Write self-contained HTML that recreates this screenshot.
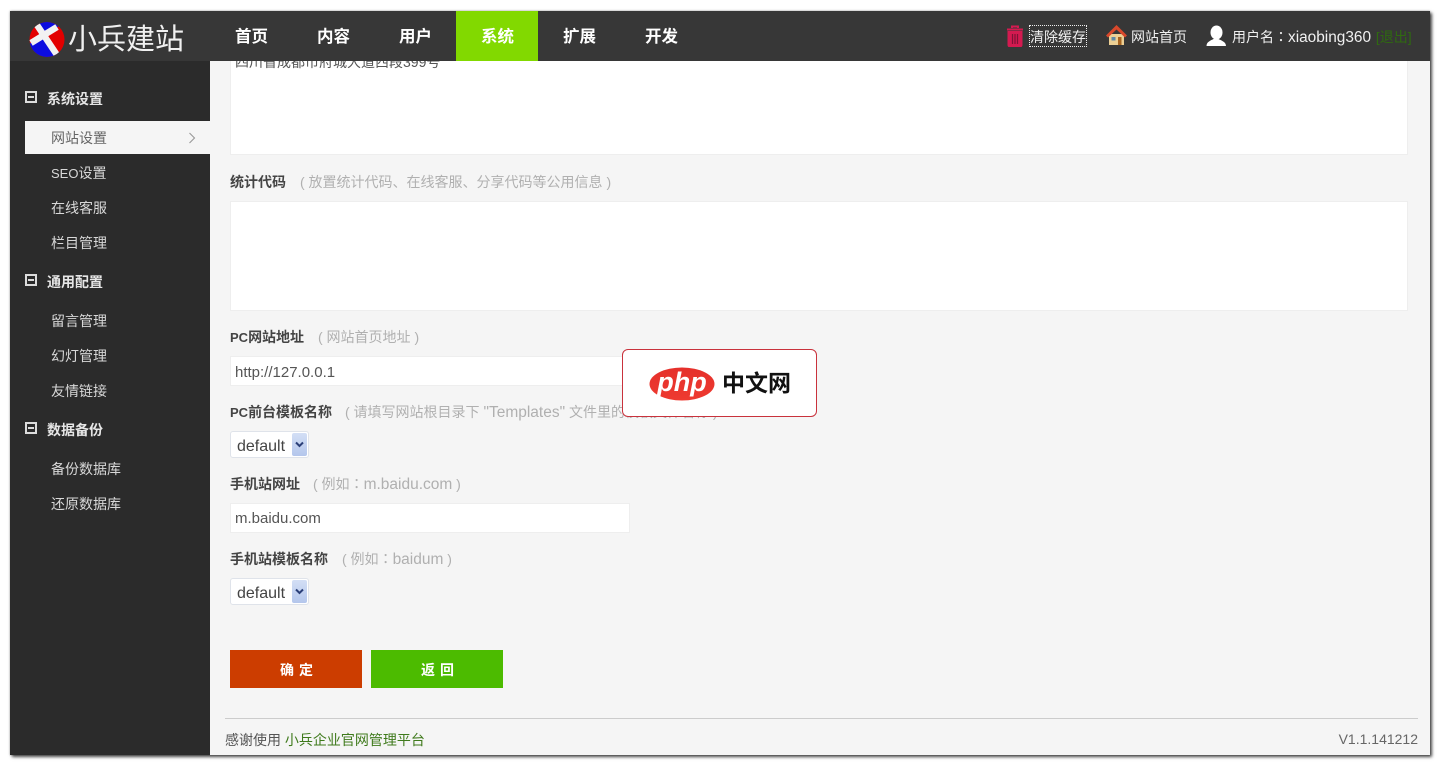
<!DOCTYPE html>
<html lang="zh"><head><meta charset="utf-8"><title>小兵建站</title>
<style>
html,body{margin:0;padding:0;width:1440px;height:766px;overflow:hidden;background:#fff}
*{box-sizing:border-box}
body{font-family:"Liberation Sans","Noto Sans CJK SC",sans-serif;font-size:14px;color:#444}
.a{position:absolute;white-space:nowrap}
.tc{font-family:"Noto Sans CJK TC",sans-serif}
#win{position:absolute;left:10px;top:11px;width:1420px;height:744px;background:#f5f5f5;box-shadow:2px 2px 3px rgba(0,0,0,.7),0 0 2px rgba(0,0,0,.35);overflow:hidden}
#side{position:absolute;left:0;top:50px;width:200px;height:694px;background:#2b2b2b}
#top{position:absolute;left:0;top:0;width:1420px;height:50px;background:#373737}
.nav{position:absolute;top:0;height:50px;width:82px;padding-left:1px;text-align:center;line-height:52px;color:#fff;font-size:16.5px;font-weight:bold}
.g{color:#e6e6e6;font-size:14px;font-weight:bold;line-height:20px}
.s{color:#d8d8d8;font-size:14px;line-height:20px}
.box{position:absolute;width:12px;height:12px;border:2px solid #ddd}
.box:after{content:"";position:absolute;left:1px;top:3px;width:6px;height:2px;background:#ddd}
.lab{font-weight:bold;font-size:14px;color:#444;line-height:20px}
.lab span{font-size:13px}
.hint{font-size:14px;color:#b0b0b0;line-height:20px}
.hint b{font-weight:normal;font-size:15.500px}
.f{position:absolute;background:#fff;border:1px solid #eee}
.sel{position:absolute;width:79px;height:27px;background:#fff;border:1px solid #dfe3ea;border-radius:3px;font-size:16px;line-height:29px;padding-left:6px;color:#444}
.sel i{position:absolute;right:1px;top:1px;width:15px;height:23px;background:linear-gradient(#d3dff5,#b4c6ec);border-radius:2px}
.sel svg{position:absolute;left:3px;top:8px}
.btn{position:absolute;width:132px;height:38px;padding-left:6px;color:#fff;font-size:14px;font-weight:bold;text-align:center;line-height:41px;letter-spacing:5px}
</style></head><body>
<div id="win">
<div id="side">
 <div class="box" style="left:15px;top:30px"></div><div class="a g" style="left:37px;top:28px">系统设置</div>
 <div class="a" style="left:15px;top:60px;width:185px;height:33px;background:#f5f5f5"></div>
 <div class="a s" style="left:41px;top:67px;color:#666">网站设置</div>
 <svg class="a" style="left:178px;top:71px" width="8" height="12"><path d="M1.500 1l5 5-5 5" fill="none" stroke="#999" stroke-width="1.100"/></svg>
 <div class="a s" style="left:41px;top:102px"><span style="font-size:13px">SEO</span>设置</div>
 <div class="a s" style="left:41px;top:137px">在线客服</div>
 <div class="a s" style="left:41px;top:172px">栏目管理</div>
 <div class="box" style="left:15px;top:213px"></div><div class="a g" style="left:37px;top:211px">通用配置</div>
 <div class="a s" style="left:41px;top:250px">留言管理</div>
 <div class="a s" style="left:41px;top:285px">幻灯管理</div>
 <div class="a s" style="left:41px;top:320px">友情链接</div>
 <div class="box" style="left:15px;top:361px"></div><div class="a g" style="left:37px;top:359px">数据备份</div>
 <div class="a s" style="left:41px;top:398px">备份数据库</div>
 <div class="a s" style="left:41px;top:433px">还原数据库</div>
</div>

<div class="f" style="left:220px;top:30px;width:1178px;height:114px"></div>
<div class="a" style="left:225px;top:41px;font-size:14px;line-height:20px;color:#555">四川省成都市府城大道西段399号</div>

<div class="a lab" style="left:220px;top:161px">统计代码</div>
<div class="a hint" style="left:290px;top:161px">( 放置统计代码、在线客服、分享代码等公用信息 )</div>
<div class="f" style="left:220px;top:190px;width:1178px;height:110px"></div>

<div class="a lab" style="left:220px;top:316px"><span>PC</span>网站地址</div>
<div class="a hint" style="left:308px;top:316px">( 网站首页地址 )</div>
<div class="f" style="left:220px;top:345px;width:400px;height:30px"></div>
<div class="a" style="left:225px;top:352px;font-size:15px;line-height:20px;color:#555">http://127.0.0.1</div>

<div class="a lab" style="left:220px;top:391px"><span>PC</span>前台模板名称</div>
<div class="a hint" style="left:335px;top:391px">( 请填写网站根目录下 <b>"Templates"</b> 文件里的模板文件名称 )</div>
<div class="sel" style="left:220px;top:420px">default<i><svg width="9" height="7"><path d="M1 1.500l3.500 3.500L8 1.500" fill="none" stroke="#2b3f78" stroke-width="2"/></svg></i></div>

<div class="a lab" style="left:220px;top:463px">手机站网址</div>
<div class="a hint" style="left:303px;top:463px">( 例如<span class="tc" lang="zh-Hant">：</span><b>m.baidu.com</b> )</div>
<div class="f" style="left:220px;top:492px;width:400px;height:30px"></div>
<div class="a" style="left:225px;top:498px;font-size:15px;line-height:20px;color:#555">m.baidu.com</div>

<div class="a lab" style="left:220px;top:538px">手机站模板名称</div>
<div class="a hint" style="left:332px;top:538px">( 例如<span class="tc" lang="zh-Hant">：</span><b>baidum</b> )</div>
<div class="sel" style="left:220px;top:567px">default<i><svg width="9" height="7"><path d="M1 1.500l3.500 3.500L8 1.500" fill="none" stroke="#2b3f78" stroke-width="2"/></svg></i></div>

<div class="btn" style="left:220px;top:639px;background:#cc3d00">确定</div>
<div class="btn" style="left:361px;top:639px;background:#4cbb00">返回</div>

<div class="a" style="left:215px;top:707px;width:1193px;height:1px;background:#ccc"></div>
<div class="a" style="left:215px;top:719px;font-size:14px;line-height:20px;color:#555">感谢使用 <span style="color:#3f7a1c">小兵企业官网管理平台</span></div>
<div class="a" style="right:12px;top:718px;font-size:14px;line-height:20px;color:#666">V1.1.141212</div>

<div id="top">
 <svg class="a" style="left:19px;top:11px" width="37" height="36" viewBox="0 0 37 36">
  <defs><clipPath id="c"><circle cx="18" cy="17.500" r="17.500"/></clipPath></defs>
  <circle cx="18" cy="17.500" r="17.500" fill="#e30000"/>
  <g clip-path="url(#c)"><path d="M15 13L8 -5H40V-2Z" fill="#0c0ce0"/><path d="M15 13L-10 28L-5 38H36Z" fill="#0c0ce0"/>
  <path d="M8 3L28 33" stroke="#f2f2f2" stroke-width="6.500"/><path d="M28 5L2 21" stroke="#f2f2f2" stroke-width="6.500"/></g>
 </svg>
 <div class="a" style="left:58px;top:10px;font-size:29px;line-height:38px;color:#f0f0f0">小兵建站</div>
 <div class="nav" style="left:200px">首页</div>
 <div class="nav" style="left:282px">内容</div>
 <div class="nav" style="left:364px">用户</div>
 <div class="nav" style="left:446px;background:#82d900">系统</div>
 <div class="nav" style="left:528px">扩展</div>
 <div class="nav" style="left:610px">开发</div>

 <svg class="a" style="left:996px;top:14px" width="18" height="22" viewBox="0 0 18 22"><path d="M6 3V1.500h6V3M1 4.500h16" fill="none" stroke="#d41a50" stroke-width="2"/><path d="M2.500 7h13v13a1.500 1.500 0 0 1-1.500 1.500H4A1.500 1.500 0 0 1 2.500 20Z" fill="#d41a50" stroke="#d41a50" stroke-width="2"/><path d="M6.500 9v10M9 9v10M11.500 9v10" stroke="#7e1236" stroke-width="1.200"/></svg>
 <div class="a" style="left:1019px;top:14px;height:22px;width:58px;border:1px dotted #eee;font-size:14px;line-height:22px;color:#f0f0f0;text-align:center;overflow:hidden">清除缓存</div>
 <svg class="a" style="left:1096px;top:14px" width="21" height="21" viewBox="0 0 21 21"><path d="M3 9h15v11H3Z" fill="#eccf94"/><path d="M12 12h3.500v8H12Z" fill="#a8641f"/><path d="M5.500 12h4v3.500h-4Z" fill="#5f8aa6"/><path d="M0 10.500L10.500 0 21 10.500l-2 2-8.500-8-8.500 8Z" fill="#d9482b"/></svg>
 <div class="a" style="left:1121px;top:16px;font-size:14px;line-height:20px;color:#f0f0f0">网站首页</div>
 <svg class="a" style="left:1196px;top:14px" width="21" height="22" viewBox="0 0 21 22"><ellipse cx="10.500" cy="7.500" rx="6" ry="7" fill="#fff"/><path d="M0.500 21c0-4 4-5.500 7-7h5c3 1.500 7.500 3 7.500 7Z" fill="#fff"/></svg>
 <div class="a" style="left:1222px;top:16px;font-size:14px;line-height:20px;color:#f0f0f0">用户名<span class="tc" lang="zh-Hant">：</span><span style="font-size:15.400px">xiaobing360</span> <span style="color:#2f6a10;margin-left:1px">[退出]</span></div>
</div>

<div class="a" style="left:612px;top:338px;width:195px;height:68px;background:#fff;border:1px solid #c9323c;border-radius:6px">
 <svg class="a" style="left:26px;top:17px" width="66" height="34" viewBox="0 0 66 34"><defs><linearGradient id="r" x1="0" y1="0" x2="0" y2="1"><stop offset="0" stop-color="#e5302b"/><stop offset="1" stop-color="#ee3a30"/></linearGradient></defs><ellipse cx="33" cy="17" rx="32.500" ry="16.500" fill="url(#r)"/>
 <text x="33" y="24" text-anchor="middle" font-family="Liberation Sans" font-size="27" font-weight="bold" font-style="italic" fill="#fff">php</text></svg>
 <div class="a" style="left:99px;top:20px;font-size:23px;line-height:26px;font-weight:bold;color:#111">中文网</div>
</div>
</div>
</body></html>
